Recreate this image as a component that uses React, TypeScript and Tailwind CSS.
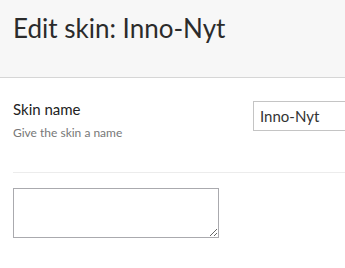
export default function App() {
  return (
    <div className="min-h-screen overflow-hidden bg-white font-['Lato',sans-serif] text-[#333]">
      <header className="h-[78px] border-b border-[#d6d6d6] bg-[#f7f7f7] px-[13px] pt-[12px]">
        <h1 className="text-[26px] leading-[32px] text-[#2b2b2b]">Edit skin: Inno-Nyt</h1>
      </header>

      <div className="pl-[13px]">
        <div className="flex items-start justify-between border-b border-[#ececec] pb-[32px] pt-[22px]">
          <div>
            <label className="block text-[15px] leading-[19px] text-[#222]">Skin name</label>
            <p className="mt-[6px] text-[12px] leading-[15px] text-[#777]">Give the skin a name</p>
          </div>
          <input
            type="text"
            defaultValue="Inno-Nyt"
            className="-mr-[60px] mt-[1px] h-[30px] w-[152px] shrink-0 border border-[#c4c4c4] px-[6px] text-[15px] text-[#333] outline-none"
          />
        </div>

        <textarea className="mt-[15px] block h-[50px] w-[206px] border border-[#aaaaae] bg-white outline-none" />
      </div>
    </div>
  );
}
